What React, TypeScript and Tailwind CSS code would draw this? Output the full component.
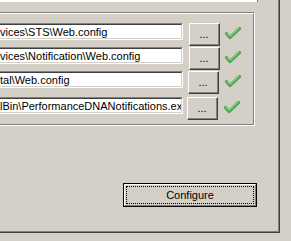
import React from 'react';

const rows = [
  { text: 'vices\\STS\\Web.config', btnMl: 'ml-[6px]', chkMl: 'ml-[5px]', mb: 'mb-px' },
  { text: 'vices\\Notification\\Web.config', btnMl: 'ml-[6px]', chkMl: 'ml-[5px]', mb: 'mb-px' },
  { text: 'tal\\Web.config', btnMl: 'ml-[5px]', chkMl: 'ml-[6px]', mb: 'mb-[3px]' },
  { text: 'lBin\\PerformanceDNANotifications.exe', btnMl: 'ml-[4px]', chkMl: 'ml-[6px]', mb: 'mb-0' },
];

function Check() {
  return (
    <svg width="16" height="13" viewBox="0 0 16 13" className="block">
      <path d="M1.5 6.5 L5 10.5 L14.5 1.5" fill="none" stroke="#4aa84a" strokeWidth="3.2" strokeLinecap="round" strokeLinejoin="round" />
      <path d="M1.8 6 L5 9.4 L14 1.2" fill="none" stroke="#9edb9e" strokeWidth="1" strokeLinecap="round" strokeLinejoin="round" />
    </svg>
  );
}

function PathRow({ text, btnMl, chkMl, mb }: { text: string; btnMl: string; chkMl: string; mb: string }) {
  return (
    <div className={`flex items-start ${mb}`}>
      {/* sunken text box, left side cut off */}
      <div className="w-[183px] h-[17px] border-t border-r border-b border-t-[#808080] border-r-white border-b-white">
        <div className="h-full border-t border-r border-b border-t-[#404040] border-r-[#d4d0c8] border-b-[#d4d0c8] bg-white overflow-hidden">
          <div className="pt-px whitespace-nowrap text-[11px] leading-[13px] text-black">{text}</div>
        </div>
      </div>
      <button className={`${btnMl} w-[31px] h-[23px] border border-t-white border-l-white border-r-[#404040] border-b-[#404040] p-0`}>
        <div className="w-full h-full border-r border-b border-[#808080] flex items-center justify-center text-[11px] leading-[13px] text-black">
          ...
        </div>
      </button>
      <div className={`${chkMl} mt-[4px]`}>
        <Check />
      </div>
    </div>
  );
}

export default function App() {
  return (
    <div
      className="w-[291px] h-[241px] bg-[#d4d0c8] overflow-hidden"
      style={{ fontFamily: '"Liberation Sans", Arial, sans-serif' }}
    >
      <div className="w-[280px] h-[233px] border-r border-b border-[#404040]">
        <div className="w-full h-full border-r border-b border-[#808080] flex flex-col">
          <div className="w-[258px] h-[2px] bg-white border-r border-[#808080]" />

          {/* group box */}
          <div className="mt-[10px] w-[255px] h-[114px] border-t border-r border-b border-t-[#808080] border-r-white border-b-white">
            <div className="h-full border-t border-r border-b border-t-white border-r-[#808080] border-b-[#808080] pt-[9px] flex flex-col">
              {rows.map((r) => (
                <PathRow key={r.text} {...r} />
              ))}
            </div>
          </div>

          <button className="mt-[57px] ml-[123px] w-[134px] h-[24px] border border-black p-0">
            <div className="w-full h-full border border-t-white border-l-white border-r-[#808080] border-b-[#808080] p-px">
              <div className="w-full h-full border border-dotted border-black flex items-center justify-center text-[11px] leading-[13px] text-black">
                Configure
              </div>
            </div>
          </button>
        </div>
      </div>
    </div>
  );
}
